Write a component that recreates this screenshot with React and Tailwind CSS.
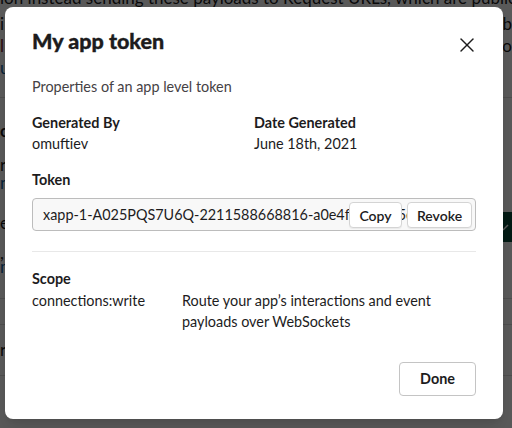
import { X } from 'lucide-react';

const font = { fontFamily: 'Lato, "Noto Sans", sans-serif' };

function BackdropPage() {
  return (
    <div className="flex flex-col text-[17px] leading-[22px] text-[#1d1c1d]">
      <div className="-mt-[13px] h-[22px] whitespace-nowrap">
        ion instead sending these payloads to Request URLs, which are public HTTP endpoints
      </div>
      <div className="mt-[4px] flex h-[22px] justify-between">
        <span>i</span>
        <span>b</span>
      </div>
      <div className="flex h-[22px] justify-between">
        <span className="text-[#7a1f2e]">l</span>
        <span>o</span>
      </div>
      <div className="flex h-[22px] justify-between">
        <span className="text-[#1264a3]">u</span>
        <span></span>
      </div>
      <div className="mt-[18px] border-b border-[#dddddd]"></div>
      <div className="mt-[22px] h-[22px] font-bold">c</div>
      <div className="mt-[12px] h-[18px]">r</div>
      <div className="h-[18px] text-[#1264a3]">n</div>
      <div className="mt-[22px] flex h-[30px] items-start justify-between">
        <span>e</span>
        <span className="flex h-[30px] w-[9px] items-center justify-center bg-[#0b4a3a]">
          <svg width="9" height="10" viewBox="0 0 9 10" fill="none">
            <path d="M0 8 L5 3" stroke="#ffffff" strokeWidth="1.5" />
          </svg>
        </span>
      </div>
      <div className="h-[14px]">,</div>
      <div className="h-[18px] text-[#1264a3]">m</div>
      <div className="mt-[24px] border-b border-[#dddddd]"></div>
      <div className="mt-[25px] border-b border-[#dddddd]"></div>
      <div className="mt-[14px] h-[22px]">r</div>
      <div className="mt-[14px] border-b border-[#dddddd]"></div>
    </div>
  );
}

function Field({ label, value }) {
  return (
    <div className="flex flex-col text-[14.4px] leading-[21px] text-[#1d1c1d]">
      <div className="font-bold">{label}</div>
      <div>{value}</div>
    </div>
  );
}

export default function App() {
  return (
    <div className="relative h-[428px] w-[512px] overflow-hidden bg-white" style={font}>
      <BackdropPage />
      <div className="absolute inset-0 bg-black/65"></div>

      <div className="absolute left-[5px] top-[7px] flex h-[412px] w-[498px] flex-col rounded-lg bg-white px-[27px] shadow-lg">
        <div className="flex items-start justify-between pt-[20px]">
          <h1 className="text-[21.5px] leading-[28px] font-black text-[#1d1c1d] [-webkit-text-stroke:0.35px_#1d1c1d]">My app token</h1>
          <X className="-mr-[3px] mt-[6px] h-6 w-6 text-[#1d1c1d]" strokeWidth={1.4} />
        </div>

        <p className="mt-[19px] text-[14.4px] leading-[21px] text-[#454245]">
          Properties of an app level token
        </p>

        <div className="mt-[15px] grid grid-cols-[222px_1fr]">
          <Field label="Generated By" value="omuftiev" />
          <Field label="Date Generated" value="June 18th, 2021" />
        </div>

        <div className="mt-[15px] text-[14.4px] leading-[21px] font-bold text-[#1d1c1d]">Token</div>

        <div className="relative mt-[8px] flex h-[33px] items-center overflow-hidden rounded-[4px] border border-[#bcbcbc] bg-[#f8f8f8] pl-[10px]">
          <span className="flex-1 overflow-hidden whitespace-nowrap text-[14.4px] text-[#1d1c1d]">
            xapp-1-A025PQS7U6Q-2211588668816-a0e4f8c2d1b5e93a7c</span>
          <div className="absolute right-[3px] top-[3px] flex gap-[5px]">
            <button className="h-[26px] w-[53px] rounded-[4px] border border-[#d4d4d4] bg-white text-[14px] font-semibold text-[#1d1c1d] shadow-[0_1px_1px_rgba(0,0,0,0.06)]">
              Copy
            </button>
            <button className="h-[26px] w-[65px] rounded-[4px] border border-[#d4d4d4] bg-white text-[14px] font-semibold text-[#1d1c1d] shadow-[0_1px_1px_rgba(0,0,0,0.06)]">
              Revoke
            </button>
          </div>
        </div>

        <div className="mt-[20px] border-t border-[#e8e8e8]"></div>

        <div className="mt-[16px] text-[14.4px] leading-[21px] font-bold text-[#1d1c1d]">Scope</div>
        <div className="mt-[1px] grid grid-cols-[150px_1fr] text-[14.4px] leading-[21px] text-[#1d1c1d]">
          <div>connections:write</div>
          <div className="w-[265px]">Route your app’s interactions and event payloads over WebSockets</div>
        </div>

        <div className="mt-auto mb-[23px] flex justify-end">
          <button className="h-[34px] w-[77px] rounded-[4px] border border-[#c4c4c4] bg-white text-[14.4px] font-bold text-[#1d1c1d]">
            Done
          </button>
        </div>
      </div>
    </div>
  );
}
